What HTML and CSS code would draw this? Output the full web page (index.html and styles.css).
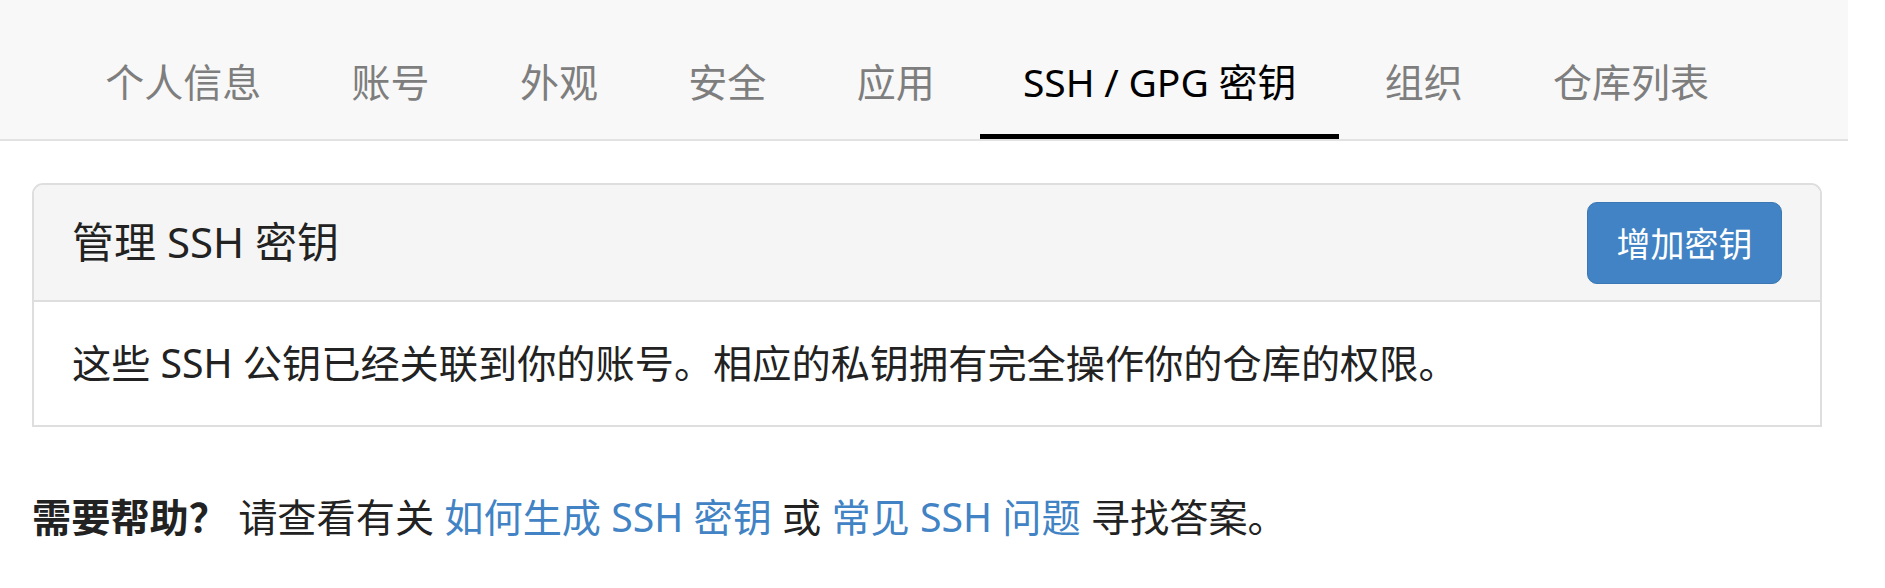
FILE: index.html
```html
<!DOCTYPE html>
<html lang="zh-CN">
<head>
<meta charset="utf-8">
<title>SSH / GPG 密钥</title>
<link rel="stylesheet" href="styles.css">
</head>
<body>
<div class="page">
  <nav class="tabs">
    <a class="tab">个人信息</a>
    <a class="tab">账号</a>
    <a class="tab">外观</a>
    <a class="tab">安全</a>
    <a class="tab">应用</a>
    <a class="tab active">SSH / GPG 密钥</a>
    <a class="tab">组织</a>
    <a class="tab">仓库列表</a>
  </nav>
  <section class="card">
    <div class="card-header">
      <h2 class="card-title">管理 SSH 密钥</h2>
      <button class="btn-primary">增加密钥</button>
    </div>
    <div class="card-body">
      这些 SSH 公钥已经关联到你的账号。相应的私钥拥有完全操作你的仓库的权限。
    </div>
  </section>
  <p class="help"><strong>需要帮助？</strong> 请查看有关 <a class="link">如何生成 SSH 密钥</a> 或 <a class="link">常见 SSH 问题</a> 寻找答案。</p>
</div>
</body>
</html>
```

FILE: styles.css
```css
html, body {
  margin: 0;
  padding: 0;
  background: #ffffff;
}

body {
  font-family: "Noto Sans", "Noto Sans CJK SC", sans-serif;
  font-size: 39.2px;
  color: #222222;
}

.page {
  width: 1848px;
}

.tabs {
  display: flex;
  height: 139px;
  padding-left: 60px;
  background: #f8f8f8;
  border-bottom: 2px solid #e2e2e2;
}

.tab {
  box-sizing: border-box;
  height: 139px;
  padding: 52px 45.2px 0;
  font-size: 39px;
  line-height: 60px;
  color: #7e7e7e;
  border-bottom: 5px solid transparent;
  white-space: nowrap;
}

.tab.active {
  padding: 52px 43px 0;
  word-spacing: -0.5px;
  color: #000000;
  border-bottom-color: #000000;
}

.card {
  margin: 42px 0 0 32px;
  width: 1790px;
  box-sizing: border-box;
  border: 2px solid #dedede;
  border-radius: 11px 11px 0 0;
}

.card-header {
  display: flex;
  align-items: center;
  justify-content: space-between;
  box-sizing: border-box;
  height: 117px;
  padding: 0 38px 0 38px;
  background: #f5f5f5;
  border-bottom: 2px solid #dedede;
  border-radius: 9px 9px 0 0;
}

.card-title {
  margin: 0;
  font-size: 42px;
  font-weight: normal;
  color: #222222;
  line-height: 1.3;
}

.btn-primary {
  box-sizing: border-box;
  width: 195px;
  height: 82px;
  padding: 0;
  font-family: inherit;
  font-size: 34px;
  color: #ffffff;
  background: #4183c4;
  border: 1px solid #3a77b4;
  border-radius: 10px;
}

.card-body {
  box-sizing: border-box;
  height: 123px;
  padding: 0 38px;
  display: flex;
  align-items: center;
  line-height: 1.3;
  color: #222222;
}

.help {
  margin: 62px 0 0 32px;
  line-height: 56px;
  color: #222222;
}

.help strong {
  font-weight: bold;
}

.link {
  color: #4183c4;
  text-decoration: none;
}
```
